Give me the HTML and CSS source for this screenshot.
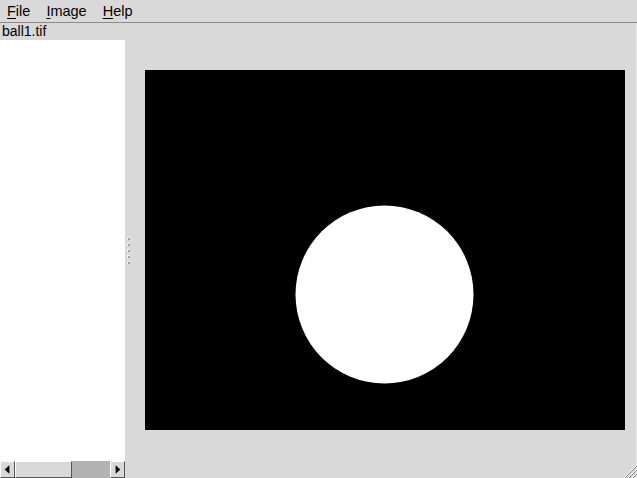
FILE: index.html
```html
<!DOCTYPE html>
<html>
<head>
<meta charset="utf-8">
<link rel="stylesheet" href="styles.css">
</head>
<body>
<div class="app">
  <div class="menubar">
    <span class="menu"><u>F</u>ile</span>
    <span class="menu"><u>I</u>mage</span>
    <span class="menu"><u>H</u>elp</span>
  </div>
  <div class="main">
    <div class="left">
      <div class="header">ball1.tif</div>
      <div class="list"></div>
      <div class="hscroll">
        <div class="arrow">
          <svg width="14" height="15" viewBox="0 0 14 15"><polygon points="9,3 9,12 4,7.5" fill="#000"/></svg>
        </div>
        <div class="trough">
          <div class="thumb"></div>
        </div>
        <div class="arrow">
          <svg width="14" height="15" viewBox="0 0 14 15"><polygon points="5,3 5,12 10,7.5" fill="#000"/></svg>
        </div>
      </div>
    </div>
    <div class="splitter">
      <span class="dot"></span><span class="dot"></span><span class="dot"></span><span class="dot"></span><span class="dot"></span>
    </div>
    <div class="right">
      <svg class="image" width="480" height="360" viewBox="0 0 480 360">
        <rect width="480" height="360" fill="#000"/>
        <circle cx="239.5" cy="224.5" r="89" fill="#fff"/>
      </svg>
    </div>
  </div>
  <svg class="grip" width="15" height="15" viewBox="0 0 15 15">
    <g stroke-width="1">
      <line x1="15" y1="2" x2="2" y2="15" stroke="#fff"/>
      <line x1="15" y1="3" x2="3" y2="15" stroke="#888"/>
      <line x1="15" y1="6" x2="6" y2="15" stroke="#fff"/>
      <line x1="15" y1="7" x2="7" y2="15" stroke="#888"/>
      <line x1="15" y1="10" x2="10" y2="15" stroke="#fff"/>
      <line x1="15" y1="11" x2="11" y2="15" stroke="#888"/>
    </g>
  </svg>
</div>
</body>
</html>
```

FILE: styles.css
```css
html, body {
  margin: 0;
  padding: 0;
  background: #d9d9d9;
}
.app {
  position: relative;
  width: 637px;
  height: 478px;
  overflow: hidden;
  display: flex;
  flex-direction: column;
  font-family: "Liberation Sans", Arial, sans-serif;
  background: #d9d9d9;
  color: #000;
}
.menubar {
  height: 22px;
  border-bottom: 1px solid #8a8a8a;
  display: flex;
  align-items: center;
  font-size: 14.5px;
  padding-left: 7px;
  gap: 16px;
  box-sizing: content-box;
}
.menu u {
  text-decoration: underline;
  text-underline-offset: 2px;
}
.main {
  flex: 1;
  display: flex;
  min-height: 0;
}
.left {
  width: 125px;
  display: flex;
  flex-direction: column;
}
.header {
  height: 17px;
  line-height: 17px;
  font-size: 14px;
  padding-left: 2px;
  background: #d9d9d9;
}
.list {
  flex: 1;
  background: #fff;
}
.hscroll {
  height: 18px;
  display: flex;
  background: #c3c3c3;
  border-top: 1px solid #fff;
  box-sizing: border-box;
}
.arrow {
  width: 15px;
  display: flex;
  align-items: center;
  justify-content: center;
  background: #d9d9d9;
  border-left: 1px solid #fff;
  border-top: 1px solid #fff;
  border-right: 1px solid #555;
  border-bottom: 1px solid #555;
  box-sizing: border-box;
}
.trough {
  flex: 1;
  background: #b3b3b3;
}
.thumb {
  width: 57px;
  height: 100%;
  background: #d9d9d9;
  border-left: 1px solid #fff;
  border-top: 1px solid #fff;
  border-right: 1px solid #555;
  border-bottom: 1px solid #555;
  box-sizing: border-box;
}
.splitter {
  width: 6px;
  display: flex;
  flex-direction: column;
  align-items: center;
  justify-content: center;
  gap: 3px;
}
.dot {
  width: 2px;
  height: 2px;
  background: #a0a0a0;
  border-left: 1px solid #f0f0f0;
  border-top: 1px solid #f0f0f0;
  box-sizing: content-box;
}
.right {
  flex: 1;
  padding: 47px 0 0 14px;
  border-right: 1px solid #ededed;
}
.image {
  display: block;
}
.grip {
  position: absolute;
  right: 0;
  bottom: 0;
}
```
